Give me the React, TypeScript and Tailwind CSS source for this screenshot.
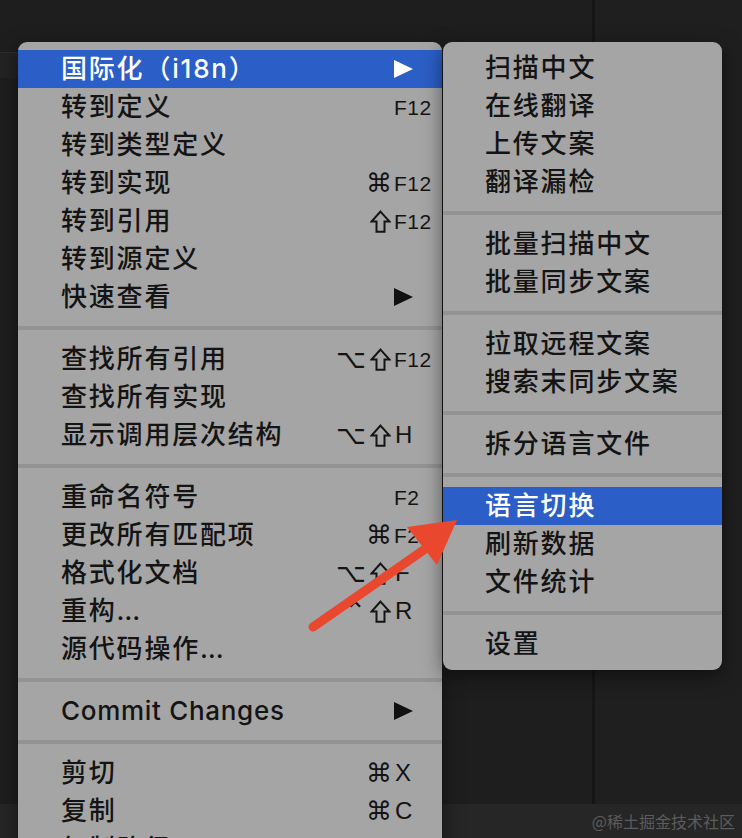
import React from "react";

type Item =
  | { type: "sep" }
  | {
      type: "item";
      label: string;
      mods?: string[];
      k?: string;
      kSize?: "sm" | "lg";
      arrow?: boolean;
      active?: boolean;
      wide?: boolean;
    };

const mainItems: Item[] = [
  { type: "item", label: "国际化（i18n）", arrow: true, active: true },
  { type: "item", label: "转到定义", k: "F12", kSize: "sm" },
  { type: "item", label: "转到类型定义" },
  { type: "item", label: "转到实现", mods: ["⌘"], k: "F12", kSize: "sm" },
  { type: "item", label: "转到引用", mods: ["⇧"], k: "F12", kSize: "sm" },
  { type: "item", label: "转到源定义" },
  { type: "item", label: "快速查看", arrow: true },
  { type: "sep" },
  { type: "item", label: "查找所有引用", mods: ["⌥", "⇧"], k: "F12", kSize: "sm" },
  { type: "item", label: "查找所有实现" },
  { type: "item", label: "显示调用层次结构", mods: ["⌥", "⇧"], k: "H", kSize: "lg" },
  { type: "sep" },
  { type: "item", label: "重命名符号", k: "F2", kSize: "sm" },
  { type: "item", label: "更改所有匹配项", mods: ["⌘"], k: "F2", kSize: "sm" },
  { type: "item", label: "格式化文档", mods: ["⌥", "⇧"], k: "F", kSize: "lg" },
  { type: "item", label: "重构…", mods: ["⌃", "⇧"], k: "R", kSize: "lg" },
  { type: "item", label: "源代码操作…" },
  { type: "sep" },
  { type: "item", label: "Commit Changes", arrow: true, wide: true },
  { type: "sep" },
  { type: "item", label: "剪切", mods: ["⌘"], k: "X", kSize: "lg" },
  { type: "item", label: "复制", mods: ["⌘"], k: "C", kSize: "lg" },
  { type: "item", label: "复制路径", mods: ["⌥", "⌘"], k: "C", kSize: "lg" },
];

const subItems: Item[] = [
  { type: "item", label: "扫描中文" },
  { type: "item", label: "在线翻译" },
  { type: "item", label: "上传文案" },
  { type: "item", label: "翻译漏检" },
  { type: "sep" },
  { type: "item", label: "批量扫描中文" },
  { type: "item", label: "批量同步文案" },
  { type: "sep" },
  { type: "item", label: "拉取远程文案" },
  { type: "item", label: "搜索末同步文案" },
  { type: "sep" },
  { type: "item", label: "拆分语言文件" },
  { type: "sep" },
  { type: "item", label: "语言切换", active: true },
  { type: "item", label: "刷新数据" },
  { type: "item", label: "文件统计" },
  { type: "sep" },
  { type: "item", label: "设置" },
];

function Sep() {
  return (
    <div className="flex h-[24px] items-center">
      <div className="h-[4px] w-full bg-[#939393]" />
    </div>
  );
}

function Tri({ white }: { white?: boolean }) {
  return (
    <svg width="19" height="18" viewBox="0 0 19 18" className="shrink-0">
      <polygon points="0,0 19,9 0,18" fill={white ? "#ffffff" : "#111111"} />
    </svg>
  );
}

function ShiftIcon() {
  return (
    <svg width="21" height="23" viewBox="0 0 21 23" className="mx-[1px] block shrink-0">
      <polygon
        points="10.5,1.6 19.5,11.5 14.5,11.5 14.5,21.8 6.5,21.8 6.5,11.5 1.5,11.5"
        fill="none"
        stroke="#141414"
        strokeWidth="2"
        strokeLinejoin="miter"
      />
    </svg>
  );
}

function MainRow({ it }: { it: Extract<Item, { type: "item" }> }) {
  return (
    <div
      className={
        it.active
          ? "flex h-[38px] items-center bg-[#2b5ec6] text-white"
          : "flex h-[38px] items-center text-[#141414]"
      }
    >
      <span
        className={
          it.wide
            ? "flex-1 pl-[43px] text-[26px] font-[500] leading-none tracking-[0.7px]"
            : "flex-1 pl-[43px] text-[26px] font-[500] leading-none tracking-[1.8px]"
        }
      >
        {it.label}
      </span>
      <span className="flex shrink-0 items-center justify-end gap-[3px] pr-[2px] font-['DejaVu_Sans',sans-serif] text-[26px] leading-none">
        {(it.mods || []).map((m, i) =>
          m === "⇧" ? <ShiftIcon key={i} /> : <span key={i}>{m}</span>
        )}
      </span>
      <span className="flex w-[48px] shrink-0 items-center leading-none">
        {it.arrow ? (
          <Tri white={it.active} />
        ) : it.k ? (
          <span
            className={
              it.kSize === "sm"
                ? "font-['Liberation_Sans',sans-serif] text-[21px] tracking-[0.5px]"
                : "pl-[1px] font-['Liberation_Sans',sans-serif] text-[24px]"
            }
          >
            {it.k}
          </span>
        ) : null}
      </span>
    </div>
  );
}

function SubRow({ it }: { it: Extract<Item, { type: "item" }> }) {
  return (
    <div
      className={
        it.active
          ? "flex h-[38px] items-center bg-[#2b5ec6] text-white"
          : "flex h-[38px] items-center text-[#141414]"
      }
    >
      <span className="pl-[42px] text-[26px] font-[500] leading-none tracking-[1.8px]">
        {it.label}
      </span>
    </div>
  );
}

export default function App() {
  return (
    <div className="relative h-[838px] w-[742px] overflow-hidden bg-[#1e1e1e] font-['Inter','Noto_Sans_CJK_SC',sans-serif]">
      {/* background editor panes */}
      <div className="flex h-[838px] flex-col">
        <div className="flex flex-1">
          <div className="flex-1 pt-[52px]">
            <div className="h-[26px] w-full border-t border-[#2e2e2e] bg-[#232323]" />
          </div>
          <div className="w-[3px] bg-[#161616]" />
          <div className="w-[147px] bg-[#1f1f1f]" />
        </div>
        <div className="flex h-[34px] items-center justify-end bg-[#262626] pr-[7px]">
          <span className="font-['Noto_Sans_CJK_SC',sans-serif] text-[16px] text-[#5c5c5c]">
            @稀土掘金技术社区
          </span>
        </div>
      </div>

      {/* main context menu */}
      <div className="absolute left-[18px] top-[42px] w-[424px] rounded-t-[9px] bg-[#a5a5a5] pt-[8px] shadow-[0_6px_20px_rgba(0,0,0,0.5)]">
        {mainItems.map((it, i) =>
          it.type === "sep" ? <Sep key={i} /> : <MainRow key={i} it={it} />
        )}
      </div>

      {/* submenu */}
      <div className="absolute left-[443px] top-[42px] w-[279px] rounded-[9px] bg-[#a5a5a5] py-[7px] shadow-[0_6px_20px_rgba(0,0,0,0.5)]">
        {subItems.map((it, i) =>
          it.type === "sep" ? <Sep key={i} /> : <SubRow key={i} it={it} />
        )}
      </div>

      {/* red annotation arrow */}
      <svg
        className="pointer-events-none absolute left-0 top-0"
        width="742"
        height="838"
        viewBox="0 0 742 838"
      >
        <line
          x1="313"
          y1="627"
          x2="428"
          y2="547"
          stroke="#e9482f"
          strokeWidth="9"
          strokeLinecap="round"
        />
        <polygon points="457,520 407,527 437,565" fill="#e9482f" />
      </svg>
    </div>
  );
}
